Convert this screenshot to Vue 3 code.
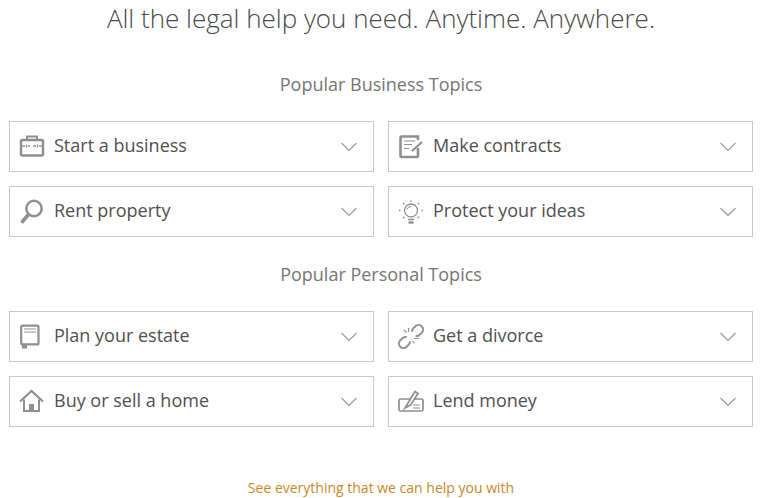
<script setup>
const business = [
  { label: 'Start a business', icon: 'case' },
  { label: 'Make contracts', icon: 'doc' },
  { label: 'Rent property', icon: 'key' },
  { label: 'Protect your ideas', icon: 'bulb' },
]
const personal = [
  { label: 'Plan your estate', icon: 'will' },
  { label: 'Get a divorce', icon: 'link' },
  { label: 'Buy or sell a home', icon: 'home' },
  { label: 'Lend money', icon: 'check' },
]
const groups = [
  { title: 'Popular Business Topics', items: business },
  { title: 'Popular Personal Topics', items: personal },
]
</script>

<template>
  <main class="page">
    <h1 class="title">All the legal help you need. Anytime. Anywhere.</h1>
    <section v-for="g in groups" :key="g.title" class="group">
      <h2 class="heading">{{ g.title }}</h2>
      <div class="grid">
        <div v-for="item in g.items" :key="item.label" class="card">
          <svg class="icon" viewBox="0 0 26 27" fill="none" stroke="#8f8f8f" stroke-width="1.6">
            <template v-if="item.icon === 'case'">
              <rect x="2" y="7" width="22" height="15.500" rx="1.500" stroke-width="2.400" />
              <path d="M8 7V3.500h10V7" stroke-width="2" />
              <path d="M2 13h4M9 13h2M14 13h3M20 13h4" stroke-width="1.300" />
              <path d="M7.500 11.500v3M18.500 11.500v3" stroke-width="1.300" />
            </template>
            <template v-else-if="item.icon === 'doc'">
              <path d="M20 7V3.500H3.500a1 1 0 0 0-1 1V23a1 1 0 0 0 1 1H19a1 1 0 0 0 1-1v-8" stroke-width="2.600" />
              <path d="M6 8h11M6 11.500h8M6 15.500h5" stroke-width="1.200" />
              <path d="M14 18l10-9" stroke-width="2.200" />
            </template>
            <template v-else-if="item.icon === 'key'">
              <circle cx="15" cy="10.500" r="7.700" stroke-width="2.500" />
              <path d="M9.500 16.500L3.500 23.500" stroke-width="3.600" stroke-linecap="round" />
            </template>
            <template v-else-if="item.icon === 'bulb'">
              <circle cx="13" cy="12.500" r="6.500" stroke-width="1.300" />
              <path d="M13 8.500a4 4 0 0 0-4 3" stroke-width="1" />
              <path d="M10 21.500h6" stroke-width="1.500" />
              <path d="M10.500 24.500h5" stroke-width="2.400" />
              <path d="M13 2.500v1.500M5 5l1.200 1.200M21 5l-1.200 1.200M1 12.500h1.500M23.500 12.500H25M5 20l1.200-1.200M21 20l-1.200-1.200" stroke-width="1.400" />
            </template>
            <template v-else-if="item.icon === 'will'">
              <rect x="2.200" y="2.600" width="17.300" height="18.800" rx="1.500" stroke-width="2.200" />
              <path d="M5 6h12M5 9h12" stroke-width="1.100" />
              <path d="M3 21h5v4.500H3z" fill="#8f8f8f" stroke="none" />
            </template>
            <template v-else-if="item.icon === 'link'">
              <rect x="-6" y="-4.500" width="12" height="9" rx="4.500" transform="translate(6.500 19.500) rotate(-45)" stroke-width="2" stroke-dasharray="7.500 6 20.800 0" />
              <rect x="-6" y="-4.500" width="12" height="9" rx="4.500" transform="translate(19.500 7.500) rotate(-45)" stroke-width="2" stroke-dasharray="24 6 4.300 0" />
              <path d="M10.500 5v4M6 7l2.500 2.500M16 15.500h5M14.500 18l2 2.500" stroke-width="1.200" />
            </template>
            <template v-else-if="item.icon === 'home'">
              <path d="M1 13.500L12.500 3 24 13.500" stroke-width="2.200" />
              <path d="M5 11.500V23h15V11.500" stroke-width="2" />
              <rect x="10" y="16" width="5" height="7" fill="#8f8f8f" stroke="none" />
            </template>
            <template v-else>
              <rect x="1" y="11" width="24" height="12" rx="1.500" stroke-width="1.700" />
              <path d="M7 20L17 3.500l3 2-7.500 11.500-5.500 3z" fill="#fff" stroke-width="1.700" />
              <path d="M15 17h7M15 20h7" stroke-width="1.200" />
            </template>
          </svg>
          <span class="label">{{ item.label }}</span>
          <svg class="chev" viewBox="0 0 16 10" fill="none" stroke="#999" stroke-width="1.100">
            <path d="M.5 1L8 8.500 15.500 1" />
          </svg>
        </div>
      </div>
    </section>
    <a class="more">See everything that we can help you with</a>
  </main>
</template>

<style scoped>
.page {
  width: 762px;
  height: 498px;
  overflow: hidden;
  box-sizing: border-box;
  padding: 0 9px;
  font-family: "Open Sans", sans-serif;
  display: flex;
  flex-direction: column;
}
.title {
  margin: 0;
  height: 36px;
  line-height: 36px;
  font-size: 26px;
  font-weight: 300;
  color: #4a4a4a;
  text-align: center;
}
.group {
  display: flex;
  flex-direction: column;
}
.heading {
  margin: 34px 0 23px;
  font-size: 18px;
  line-height: 28px;
  font-weight: 400;
  color: #757575;
  text-align: center;
}
.group + .group .heading {
  margin-top: 23px;
}
.grid {
  display: grid;
  grid-template-columns: 365px 365px;
  grid-auto-rows: 51px;
  gap: 14px;
}
.card {
  box-sizing: border-box;
  border: 1px solid #c8c8c8;
  display: flex;
  align-items: center;
  padding: 0 16px 0 9px;
}
.icon {
  width: 26px;
  height: 27px;
  flex: none;
  margin-bottom: 1px;
}
.label {
  margin-left: 9px;
  padding-bottom: 4px;
  flex: 1;
  font-size: 18px;
  color: #505050;
}
.chev {
  width: 16px;
  height: 10px;
  flex: none;
}
.more {
  margin-top: 50px;
  text-align: center;
  font-size: 14px;
  line-height: 22px;
  color: #c9882b;
}
</style>
